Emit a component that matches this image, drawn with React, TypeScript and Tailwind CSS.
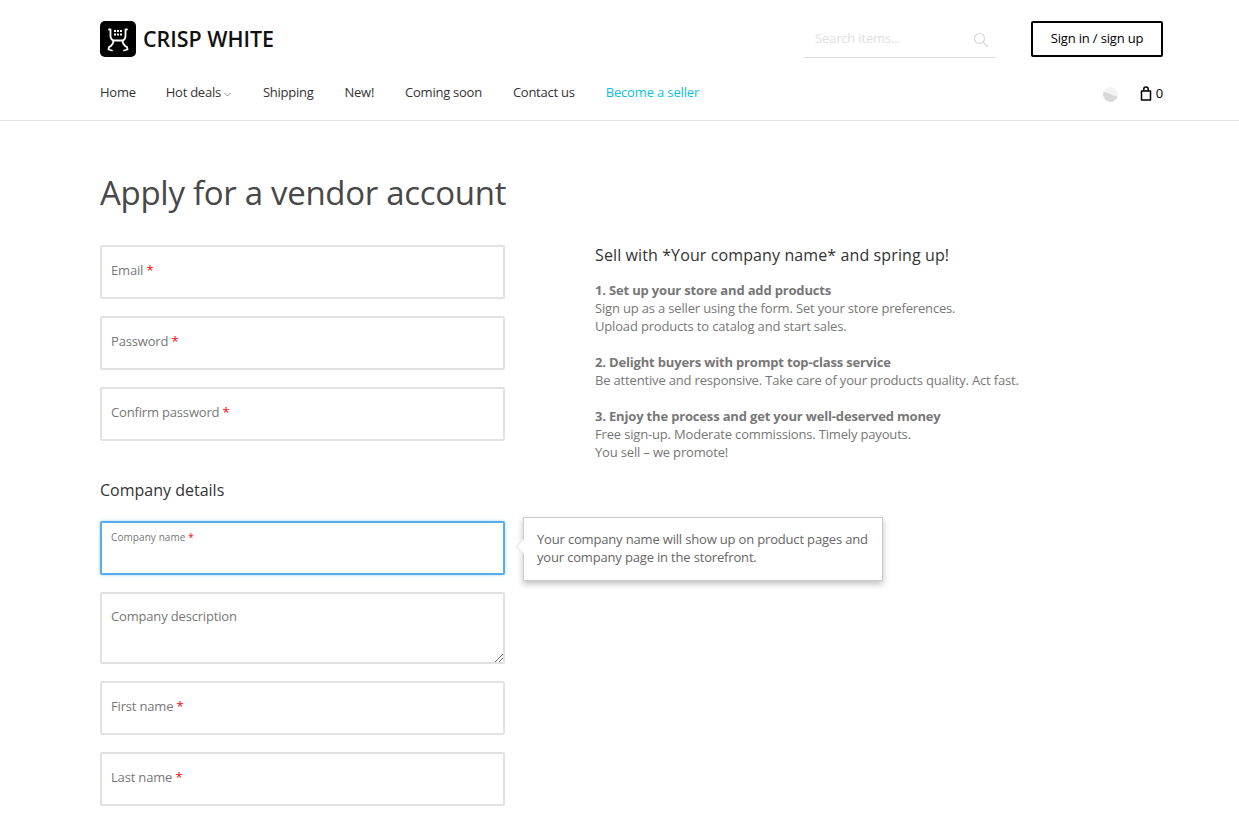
const Req = () => <span className="text-[#f00]"> *</span>;

function Field({ label, req = true }: { label: string; req?: boolean }) {
  return (
    <div className="h-[54px] border-2 border-[#e2e2e2] rounded-[2px] px-[9px] pt-[14px] text-[13px] leading-[18px] tracking-[-0.17px] text-[#777]">
      {label}
      {req && <Req />}
    </div>
  );
}

function Logo() {
  return (
    <svg width="36" height="36" viewBox="0 0 36 36" className="shrink-0">
      <rect width="36" height="36" rx="5" fill="#000" />
      <g stroke="#fff" strokeWidth="1.8" fill="none" strokeLinecap="round" strokeLinejoin="round">
        <path d="M9 8.5 H10.5 V15 Q10.5 18 13 19.5 Q14 20.5 12.5 23 Q11 25.5 9 26 L8.5 28.5 L12 29.5" />
        <path d="M27 8.5 H25.5 V15 Q25.5 18 23 19.5 Q22 20.5 23.5 23 Q25 25.5 27 26 L27.5 28.5 L24 29.5" />
        <path d="M13 19.5 H23" />
      </g>
      <g fill="#fff">
        <rect x="14" y="9" width="2" height="2" />
        <rect x="17" y="9" width="2" height="2" />
        <rect x="20" y="9" width="2" height="2" />
        <rect x="14" y="12.5" width="2" height="2" />
        <rect x="17" y="12.5" width="2" height="2" />
        <rect x="20" y="12.5" width="2" height="2" />
      </g>
    </svg>
  );
}

export default function App() {
  return (
    <div className="w-[1239px] h-[818px] overflow-hidden bg-white font-['Open_Sans',sans-serif] text-[13px] tracking-[-0.17px]">
      <header className="h-[121px] border-b border-[#e2e2e2] pl-[100px] pr-[76px]">
        <div className="flex items-center h-[78px]">
          <Logo />
          <span className="ml-[7px] text-[21.4px] leading-[36px] font-semibold text-[#111] tracking-[0px]">CRISP WHITE</span>
          <div className="ml-auto w-[192px] h-[38px] border-b border-[#ddd] flex items-center justify-between pl-[12px] pr-[6px] text-[#e0e0e0] mt-[-1px]">
            <span className="leading-[38px]">Search items...</span>
            <svg width="16" height="16" viewBox="0 0 16 16" fill="none" stroke="#d8d8d8" strokeWidth="1.2" className="mt-[4px]">
              <circle cx="6.5" cy="6.5" r="5" />
              <path d="M10.2 10.2 L15 15" />
            </svg>
          </div>
          <div className="ml-[36px] w-[132px] h-[36px] border-2 border-black rounded-[2px] flex items-center justify-center text-black text-[13px]">
            Sign in / sign up
          </div>
        </div>
        <nav className="flex items-center h-[30px] text-[13px] tracking-[-0.25px] text-[#333]">
          <span>Home</span>
          <span className="ml-[30px] flex items-center">
            Hot deals
            <svg width="7" height="5" viewBox="0 0 7 5" fill="none" stroke="#777" strokeWidth="0.8" className="ml-[3px] mt-[3px]">
              <path d="M0.5 1 L3.5 4 L6.5 1" />
            </svg>
          </span>
          <span className="ml-[32px]">Shipping</span>
          <span className="ml-[31px]">New!</span>
          <span className="ml-[31px]">Coming soon</span>
          <span className="ml-[31px]">Contact us</span>
          <span className="ml-[31px] text-[#0cc0e0] tracking-[-0.15px]">Become a seller</span>
          <div className="ml-auto flex items-center">
            <svg width="15" height="15" viewBox="0 0 15 15" className="mt-[2px]">
              <circle cx="7.5" cy="7.5" r="7.5" fill="#f3f3f3" />
              <path d="M0.6 4.6 A7.5 7.5 0 0 0 14.6 10 Z" fill="#d9d9d9" />
            </svg>
            <svg width="12" height="15" viewBox="0 0 12 15" fill="none" stroke="#000" strokeWidth="1.5" className="ml-[22px] mt-[1px]">
              <path d="M1.5 5 H10.5 V14 H1.5 Z" strokeLinejoin="round" />
              <path d="M3.8 5 V3 Q3.8 1 6 1 Q8.2 1 8.2 3 V5" />
            </svg>
            <span className="ml-[4px] mt-[1px] text-black">0</span>
          </div>
        </nav>
      </header>

      <main className="px-[100px]">
        <h1 className="mt-[50px] text-[33px] leading-[44px] text-[#484848] font-normal tracking-[-0.3px]">Apply for a vendor account</h1>
        <div className="mt-[30px] flex">
          <div className="w-[405px] shrink-0">
            <div className="flex flex-col gap-[17px]">
              <Field label="Email" />
              <Field label="Password" />
              <Field label="Confirm password" />
            </div>
            <h2 className="mt-[37px] text-[16px] leading-[24px] tracking-normal text-[#333] font-normal">Company details</h2>
            <div className="relative mt-[19px] flex flex-col gap-[17px]">
              <div className="h-[54px] border-2 border-[#55acee] rounded-[2px] px-[9px] pt-[7px] text-[10px] leading-[14px] tracking-[0.08px] text-[#777] shadow-[0_0_3px_rgba(85,172,238,0.6)]">
                Company name
                <Req />
              </div>
              <div className="absolute left-[423px] top-[-4px] w-[360px] h-[64px] bg-white border border-[#ccc] shadow-[0_3px_6px_rgba(0,0,0,0.25)] rounded-[1px] px-[13px] py-[12px] text-[13px] leading-[18px] text-[#666] z-10">
                Your company name will show up on product pages and your company page in the storefront.
                <span className="absolute left-[-6px] top-[23px] w-[11px] h-[11px] bg-white border-l border-b border-[#e4e4e4] rotate-45" />
              </div>
              <div className="relative h-[72px] border-2 border-[#e2e2e2] rounded-[2px] px-[9px] pt-[13px] text-[13px] leading-[18px] text-[#777]">
                Company description
                <svg width="8" height="8" viewBox="0 0 8 8" stroke="#444" strokeWidth="0.8" className="absolute right-0 bottom-0">
                  <path d="M0 8 L8 0 M4 8 L8 4" />
                </svg>
              </div>
              <Field label="First name" />
              <Field label="Last name" />
            </div>
          </div>
          <div className="ml-[90px] w-[450px] text-[13px] leading-[18px] text-[#777]">
            <h3 className="mt-[-2px] text-[16px] leading-[24px] text-[#333] font-normal tracking-[0.11px]">Sell with *Your company name* and spring up!</h3>
            <p className="mt-[14px]">
              <b className="font-bold">1. Set up your store and add products</b>
              <br />
              Sign up as a seller using the form. Set your store preferences.
              <br />
              Upload products to catalog and start sales.
            </p>
            <p className="mt-[18px]">
              <b className="font-bold">2. Delight buyers with prompt top-class service</b>
              <br />
              Be attentive and responsive. Take care of your products quality. Act fast.
            </p>
            <p className="mt-[18px]">
              <b className="font-bold">3. Enjoy the process and get your well-deserved money</b>
              <br />
              Free sign-up. Moderate commissions. Timely payouts.
              <br />
              You sell – we promote!
            </p>
          </div>
        </div>
      </main>
    </div>
  );
}
